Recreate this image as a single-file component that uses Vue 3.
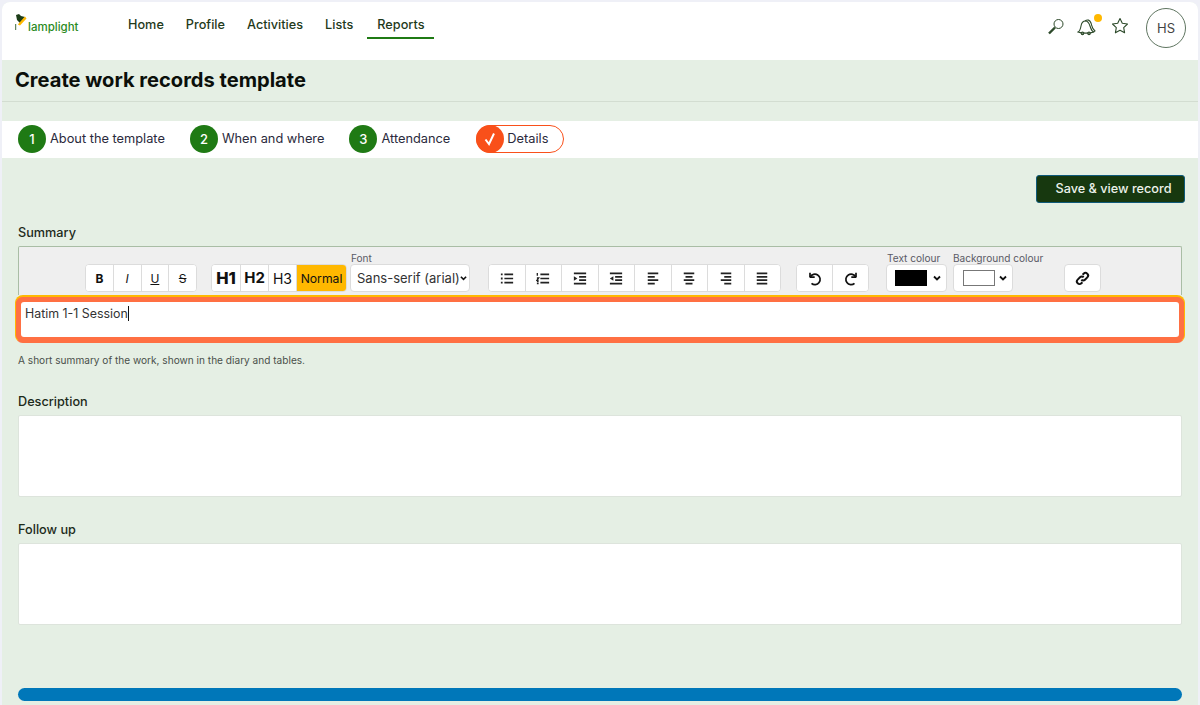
<template>
  <div class="page">
    <div class="app">
      <header class="topbar">
        <div class="logo">
          <svg class="lamp" width="13" height="18" viewBox="0 0 13 18">
            <path d="M0.700 10v6" stroke="#3f6b3a" stroke-width="1" fill="none"/>
            <path d="M1 1L4 0 6 2 10 3 5 9 2 6z" fill="#1d3d18"/>
            <path d="M10 2.500L11.500 4.500 5 11.500 2.800 10.500 5 8z" fill="#ffb800"/>
          </svg>
          <span>lamplight</span>
        </div>
        <nav class="nav">
          <a v-for="item in navItems" :key="item" class="nav-link" :class="{ active: item === 'Reports' }">{{ item }}</a>
        </nav>
        <div class="top-icons">
          <svg class="ico-search" width="20" height="20" viewBox="0 0 20 20" fill="none" stroke="#2d4a2a">
            <circle cx="12.500" cy="7" r="4.500" stroke-width="1"/>
            <path d="M9 10.500L3 16.500" stroke-width="2.400"/>
          </svg>
          <div class="bell-wrap">
            <svg width="20" height="20" viewBox="0 0 20 20" fill="none" stroke="#2d4a2a" stroke-width="1.100">
              <path d="M1 15c2-1 2.500-3 3-6s2-5 4.500-5 3.500 2 4.500 5 1.500 5 3.500 6c-3 1.500-12 1.500-15.500 0z"/>
              <path d="M8 4c2.500-2 5-1 6 2s1 6 4 8c-.5.6-1.500 1-2.500 1.200"/>
              <circle cx="5.500" cy="16.300" r="1.300"/>
              <circle cx="12" cy="16.300" r="1.300"/>
            </svg>
            <span class="dot"></span>
          </div>
          <svg class="ico-star" width="18" height="18" viewBox="0 0 18 18" fill="none" stroke="#2d4a2a" stroke-width="1.100" stroke-linejoin="round">
            <path d="M9 1.500l2.300 4.800 5.200.7-3.800 3.600.9 5.200L9 13.300l-4.600 2.500.9-5.200L1.500 7l5.200-.7z"/>
          </svg>
          <div class="avatar">HS</div>
        </div>
      </header>

      <div class="title-band">
        <h1>Create work records template</h1>
      </div>

      <div class="steps">
        <div v-for="step in steps" :key="step.label" class="step" :class="{ current: step.current }">
          <span class="step-num">
            <svg v-if="step.current" width="14" height="14" viewBox="0 0 14 14" fill="none" stroke="#fff" stroke-width="2">
              <path d="M2.500 7.500L6 12l5-10.500"/>
            </svg>
            <template v-else>{{ step.num }}</template>
          </span>
          <span class="step-label">{{ step.label }}</span>
        </div>
      </div>

      <main class="content">
        <div class="actions">
          <button class="save-btn">Save &amp; view record</button>
        </div>

        <label class="field-label summary-label">Summary</label>
        <div class="toolbar">
          <div class="btn-group fmt">
            <button class="bold">B</button>
            <button class="ital">I</button>
            <button class="under">U</button>
            <button class="strike">S</button>
          </div>
          <div class="btn-group heads">
            <button class="h1">H1</button>
            <button class="h2">H2</button>
            <button class="h3">H3</button>
            <button class="normal">Normal</button>
          </div>
          <div class="labelled font-pick">
            <span class="tool-label">Font</span>
            <div class="select-box font-box">
              <span>Sans-serif (arial)</span>
              <svg class="chev" width="7" height="6" viewBox="0 0 8 6"><path d="M1 1.500l3 3 3-3" fill="none" stroke="#111" stroke-width="1.800"/></svg>
            </div>
          </div>
          <div class="btn-group lists">
            <button v-for="icon in listIcons" :key="icon.name">
              <svg width="14" height="13" viewBox="0 0 16 14" preserveAspectRatio="none" fill="none" stroke="#222" stroke-width="1.800">
                <path :d="icon.lines"/>
                <path v-if="icon.marks" :d="icon.marks" :fill="icon.fill ? '#222' : 'none'" :stroke-width="icon.fill ? 0 : 1.500"/>
              </svg>
            </button>
          </div>
          <div class="btn-group history">
            <button>
              <svg width="16" height="16" viewBox="1 0 16 16" fill="none" stroke="#111" stroke-width="1.700">
                <path d="M4 7.500V2.800M4 7.200h4.700"/>
                <path d="M4.300 7A5.200 5.200 0 1 1 5.500 13.300"/>
              </svg>
            </button>
            <button>
              <svg width="16" height="16" viewBox="-1 0 16 16" fill="none" stroke="#111" stroke-width="1.700">
                <path d="M12 7.500V2.800M12 7.200H7.300"/>
                <path d="M11.700 7A5.200 5.200 0 1 0 10.500 13.300"/>
              </svg>
            </button>
          </div>
          <div class="labelled text-colour">
            <span class="tool-label">Text colour</span>
            <div class="select-box swatch-box">
              <span class="swatch black"></span>
              <svg class="chev" width="8" height="6" viewBox="0 0 8 6"><path d="M1 1.500l3 3 3-3" fill="none" stroke="#111" stroke-width="1.800"/></svg>
            </div>
          </div>
          <div class="labelled bg-colour">
            <span class="tool-label">Background colour</span>
            <div class="select-box swatch-box bg-box">
              <span class="swatch white"></span>
              <svg class="chev" width="8" height="6" viewBox="0 0 8 6"><path d="M1 1.500l3 3 3-3" fill="none" stroke="#111" stroke-width="1.800"/></svg>
            </div>
          </div>
          <button class="link-btn">
            <svg width="15" height="15" viewBox="0 0 15 15" fill="none" stroke="#111" stroke-width="2">
              <path d="M6.300 8.700a2.600 2.600 0 0 0 3.700 0l2.300-2.300a2.600 2.600 0 0 0-3.700-3.700l-1 1"/>
              <path d="M8.700 6.300a2.600 2.600 0 0 0-3.700 0L2.700 8.600a2.600 2.600 0 0 0 3.700 3.700l1-1"/>
            </svg>
          </button>
        </div>
        <div class="editor-ring">
          <div class="editor"><span class="typed">Hatim 1-1 Session</span></div>
        </div>
        <p class="hint">A short summary of the work, shown in the diary and tables.</p>

        <label class="field-label desc-label">Description</label>
        <div class="textbox"></div>

        <label class="field-label follow-label">Follow up</label>
        <div class="textbox"></div>

        <div class="blue-bar"></div>
      </main>
    </div>
  </div>
</template>

<script setup>
const navItems = ['Home', 'Profile', 'Activities', 'Lists', 'Reports']

const steps = [
  { num: 1, label: 'About the template' },
  { num: 2, label: 'When and where' },
  { num: 3, label: 'Attendance' },
  { num: 4, label: 'Details', current: true }
]

// toolbar glyphs, all drawn on the same 16x14 box
const listIcons = [
  { name: 'bullet', lines: 'M5 2.500h10M5 7h10M5 11.500h10', marks: 'M1 1.500h2v2H1zM1 6h2v2H1zM1 10.500h2v2H1z', fill: true },
  { name: 'ordered', lines: 'M5 2.500h10M5 7h10M5 11.500h10', marks: 'M1.500 1v3M1 6.500h2L1 9h2M1 10.500h2M1 12.500h2' },
  { name: 'indent', lines: 'M1 1.500h14M7 5.200h8M7 8.800h8M1 12.500h14', marks: 'M1 4.500L5 7l-4 2.500z', fill: true },
  { name: 'outdent', lines: 'M1 1.500h14M7 5.200h8M7 8.800h8M1 12.500h14', marks: 'M5 4.500L1 7l4 2.500z', fill: true },
  { name: 'left', lines: 'M2 1.500h12M2 5.200h8M2 8.800h12M2 12.500h8' },
  { name: 'center', lines: 'M2 1.500h12M4 5.200h8M2 8.800h12M4 12.500h8' },
  { name: 'right', lines: 'M2 1.500h12M6 5.200h8M2 8.800h12M6 12.500h8' },
  { name: 'justify', lines: 'M2 1.500h12M2 5.200h12M2 8.800h12M2 12.500h12' }
]
</script>

<style>
html, body {
  background: #eff0f7;
}
</style>

<style scoped>
.page {
  box-sizing: border-box;
  height: 705px;
  padding: 2px 2px 0;
  overflow: hidden;
  font-family: Inter, "Liberation Sans", sans-serif;
  color: #1c2a1a;
}

.app {
  height: 703px;
  background: #e5efe4;
  border-radius: 8px 8px 0 0;
  overflow: hidden;
}

.topbar {
  display: flex;
  height: 58px;
  background: #fff;
  padding-left: 13px;
}

.logo {
  display: flex;
  align-items: flex-start;
  width: 102px;
  padding-top: 12px;
  color: #2b8a1e;
  font-size: 11.500px;
  font-weight: 500;
}

.logo span {
  margin: 6px 0 0 0;
}

.nav {
  display: flex;
  height: 37px;
  gap: 0;
}

.nav-link {
  padding: 15px 11px 0;
  font-size: 12.700px;
  font-weight: 500;
  color: #1f3a1b;
}

.nav-link.active {
  border-bottom: 2px solid #1f7a14;
  margin-left: 3px;
  padding: 15px 10px 0 10px;
}

.top-icons {
  display: flex;
  align-items: flex-start;
  margin-left: auto;
  padding: 6px 12px 0 0;
}

.ico-search {
  margin: 9px 11px 0 0;
}

.bell-wrap {
  position: relative;
  height: 20px;
  margin: 9px 14px 0 0;
}

.dot {
  position: absolute;
  top: -3px;
  right: -5px;
  width: 8px;
  height: 8px;
  border-radius: 50%;
  background: #ffb800;
}

.ico-star {
  margin: 9px 17px 0 0;
}

.avatar {
  box-sizing: border-box;
  display: flex;
  align-items: center;
  justify-content: center;
  width: 40px;
  height: 40px;
  border: 1px solid #5f7560;
  border-radius: 50%;
  font-size: 13px;
  color: #444;
}

.title-band {
  height: 61px;
}

.title-band h1 {
  box-sizing: border-box;
  height: 42px;
  margin: 0;
  padding: 8px 0 0 13px;
  border-bottom: 1px solid #d3ddd1;
  font-size: 20.100px;
  line-height: 25px;
  font-weight: 700;
  color: #0b0f0a;
}

.steps {
  box-sizing: border-box;
  display: flex;
  align-items: center;
  height: 37px;
  padding: 0 0 2px 16px;
  background: #fff;
}

.step {
  display: flex;
  align-items: center;
  margin-right: 25px;
}

.step-num {
  display: flex;
  align-items: center;
  justify-content: center;
  width: 28px;
  height: 28px;
  border-radius: 50%;
  background: #1f7a14;
  color: #fff;
  font-size: 13px;
  font-weight: 500;
}

.step-label {
  margin-left: 4px;
  font-size: 12.800px;
  color: #2a2a3c;
}

.step.current {
  box-sizing: border-box;
  height: 28px;
  width: 88px;
  margin-left: 1px;
  border: 1px solid #f9501a;
  border-radius: 14px;
}

.current .step-num {
  margin-left: -1px;
  background: #f9501a;
}

.current .step-label {
  margin-left: 3px;
}

.content {
  padding: 17px 16px 0;
}

.actions {
  display: flex;
  justify-content: flex-end;
  margin-right: -3px;
}

.save-btn {
  width: 149px;
  height: 28px;
  padding: 0 0 2px 6px;
  background: #17380f;
  border: 1px solid #0f5a7a;
  border-radius: 3px;
  color: #ecf2ea;
  font: 500 12.700px Inter, "Liberation Sans", sans-serif;
}

.field-label {
  display: block;
  font-size: 12.700px;
  line-height: 16px;
  font-weight: 500;
  color: #1c2a1a;
}

.summary-label {
  margin-top: 22px;
}

.toolbar {
  box-sizing: border-box;
  display: flex;
  align-items: flex-end;
  height: 49px;
  margin-top: 5px;
  padding: 0 0 3px 66px;
  background: #efefef;
  border: 1px solid #a9bda5;
  border-bottom: 0;
  border-radius: 2px 2px 0 0;
}

.btn-group {
  display: flex;
  height: 28px;
  background: #fff;
  border: 1px solid #dcdcdc;
  border-radius: 4px;
  box-sizing: border-box;
  overflow: hidden;
}

.btn-group button {
  display: flex;
  align-items: center;
  justify-content: center;
  padding: 0;
  background: #fff;
  border: 0;
  border-left: 1px solid #dcdcdc;
  color: #111;
  font-family: Inter, "Liberation Sans", sans-serif;
}

.btn-group button:first-child {
  border-left: 0;
}

.fmt {
  width: 112px;
}

.fmt button {
  flex: 1;
  font-size: 12px;
}

.bold {
  font-weight: 700;
}

.ital {
  font-style: italic;
}

.under {
  text-decoration: underline;
}

.strike {
  text-decoration: line-through;
}

.heads {
  margin-left: 14px;
  width: 136px;
}

.heads button {
  width: 28px;
  flex: none;
}

.heads .h1 {
  font-size: 16.500px;
  font-weight: 800;
}

.heads .h2 {
  padding-bottom: 2px;
  font-size: 15px;
  font-weight: 700;
}

.heads .h3 {
  font-size: 14px;
  font-weight: 400;
}

.heads .normal {
  flex: 1;
  background: #ffb800;
  font-size: 12.200px;
}

.labelled {
  display: flex;
  flex-direction: column;
}

.tool-label {
  padding-left: 1px;
  font-size: 10.100px;
  line-height: 11px;
  color: #5a5a66;
  white-space: nowrap;
}

.bg-colour .tool-label {
  padding-left: 0;
}

.select-box {
  box-sizing: border-box;
  display: flex;
  align-items: center;
  height: 28px;
  background: #fff;
  border: 1px solid #dcdcdc;
  border-radius: 4px;
  font-size: 13px;
  color: #333;
}

.chev {
  flex-shrink: 0;
}

.font-pick {
  margin-left: 3px;
  width: 120px;
}

.font-box {
  justify-content: space-between;
  padding: 0 2px 0 6px;
  white-space: nowrap;
}

.lists {
  margin-left: 18px;
  width: 293px;
}

.lists button {
  flex: 1;
}

.history {
  margin-left: 15px;
  width: 73px;
}

.history button {
  flex: 1;
}

.text-colour {
  margin-left: 17px;
  width: 61px;
}

.bg-colour {
  margin-left: 6px;
  width: 60px;
}

.swatch-box {
  padding: 0 5px 0 8px;
  justify-content: space-between;
}

.bg-box {
  padding-left: 9px;
}

.swatch {
  box-sizing: border-box;
  width: 32px;
  height: 16px;
  border: 1px solid #777;
}

.swatch.black {
  background: #000;
  border-color: #000;
}

.swatch.white {
  background: #fff;
}

.link-btn {
  display: flex;
  align-items: center;
  justify-content: center;
  box-sizing: border-box;
  width: 37px;
  height: 28px;
  margin-left: 51px;
  padding: 0;
  background: #fff;
  border: 1px solid #dcdcdc;
  border-radius: 4px;
}

.editor-ring {
  height: 48px;
  box-sizing: border-box;
  margin: 0 -3px;
  background: #ff7043;
  border: 1.500px solid #ffb800;
  border-width: 2px 1.500px 1px;
  border-bottom-color: #ff7043;
  border-radius: 8px;
}

.editor {
  box-sizing: border-box;
  height: 45px;
  padding: 3px 4px;
  background: #fff;
  border: 5.500px solid #ff7043;
  border-radius: 8px;
  font-size: 12.400px;
  line-height: 18px;
  color: #333;
}

.typed {
  border-right: 1px solid #111;
}

.hint {
  margin: 10px 0 0;
  font-size: 10.100px;
  line-height: 14px;
  color: #4a4f4a;
}

.desc-label {
  margin-top: 27px;
}

.follow-label {
  margin-top: 25px;
}

.textbox {
  box-sizing: border-box;
  height: 82px;
  margin-top: 5px;
  background: #fff;
  border: 1px solid #dde4dc;
  border-radius: 2px;
}

.blue-bar {
  height: 13px;
  margin-top: 63px;
  background: #0077b9;
  border-radius: 7px;
}
</style>
